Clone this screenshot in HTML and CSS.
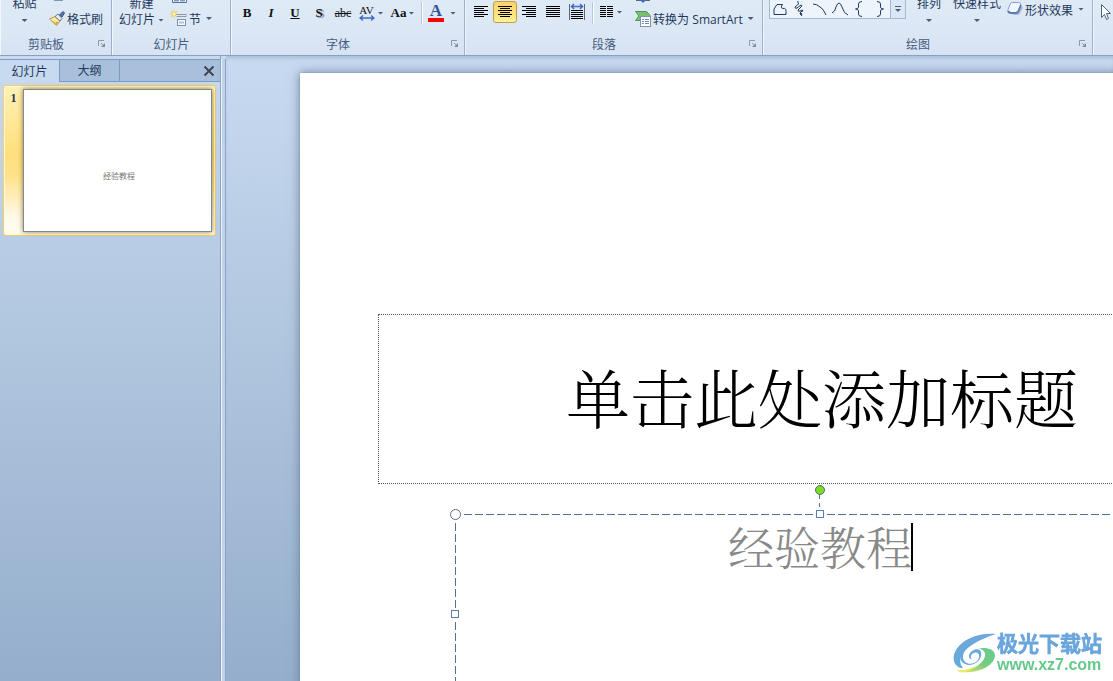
FILE: index.html
```html
<!DOCTYPE html>
<html lang="zh-CN">
<head>
<meta charset="utf-8">
<title>演示文稿</title>
<link rel="stylesheet" href="styles.css">
</head>
<body>
<div class="app">
  <header class="ribbon">
    <section class="group clipboard" aria-label="剪贴板">
      <div class="tools">
        <button class="large">粘贴<i class="caret"></i></button>
        <div class="stack">
          <button class="small" aria-label="复制"><svg width="20" height="16" viewBox="0 0 20 16"><path d="M5 6.500h9" stroke="#7f95b8" stroke-width="1"/></svg></button>
          <button class="small"><svg width="16" height="16" viewBox="0 0 16 16"><path d="M0.500 8L6 5.500 11 10 7.500 14.500z" fill="#f6e48c" stroke="#b39a4b"/><path d="M2 9l5.500 5 2-3z" fill="#d8ae3d"/><path d="M3 8.500l4 3M5.500 7.500l3.500 3" stroke="#fffce0"/><path d="M6 5.500L9 3l4 4.500-2 2.500z" fill="#e9ecf3" stroke="#6e7890"/><path d="M10.500 4L14 .5 15.500 2 13 6z" fill="#5873a8" stroke="#364f80"/></svg>格式刷</button>
        </div>
      </div>
      <footer class="caption"><span>剪贴板</span><button class="launcher" aria-label="剪贴板选项"><svg width="8" height="8" viewBox="0 0 8 8"><path d="M.5 6V.5H6" fill="none" stroke="#8d99ab"/><path d="M3 3l3 3" stroke="#8d99ab"/><path d="M7 3v4H3z" fill="#7f8ca0"/></svg></button></footer>
    </section>
    <section class="group slides" aria-label="幻灯片">
      <div class="tools">
        <button class="large">新建<span class="line">幻灯片<i class="caret"></i></span></button>
        <div class="stack">
          <button class="small" aria-label="版式"><svg width="18" height="16" viewBox="0 0 18 16"><path d="M2.500 0v8.500h14V0" fill="#fff" stroke="#53709f"/><path d="M4 6.500h5M10 6.500h5" stroke="#7f99c4" stroke-width="2"/></svg></button>
          <button class="small"><svg width="17" height="17" viewBox="0 0 17 17"><path d="M6 5.500h10.500" stroke="#8b98ac" stroke-width="3"/><path d="M6 5.500h10" stroke="#dfe5ef"/><path d="M4 0v8M0 4h8M1 1l6 6M7 1L1 7" stroke="#f2c445" stroke-width="1"/><circle cx="4" cy="4" r="1.500" fill="#fff6b0"/><rect x="7.500" y="9.500" width="8" height="6" fill="#f8fbff" stroke="#8090aa"/><path d="M9 12.500h5" stroke="#b3c0d6" stroke-width="2"/></svg>节<i class="caret"></i></button>
        </div>
      </div>
      <footer class="caption"><span>幻灯片</span></footer>
    </section>
    <section class="group font" aria-label="字体">
      <div class="tools row">
        <button class="tool"><b>B</b></button>
        <button class="tool"><b><em>I</em></b></button>
        <button class="tool"><b><u>U</u></b></button>
        <button class="tool shadow"><b>S</b></button>
        <button class="tool strike"><s>abc</s></button>
        <button class="tool wide" aria-label="字符间距"><span class="spacing">AV<svg width="16" height="6" viewBox="0 0 16 6"><path d="M1 3h14M4 .5L1 3l3 2.500M12 .5L15 3l-3 2.500" fill="none" stroke="#3d6bc0" stroke-width="1.300"/></svg></span><i class="caret"></i></button>
        <button class="tool wide case">Aa<i class="caret"></i></button>
        <i class="divider"></i>
        <button class="tool wide color" aria-label="字体颜色"><span class="swatch">A</span><i class="caret"></i></button>
      </div>
      <footer class="caption"><span>字体</span><button class="launcher" aria-label="字体选项"><svg width="8" height="8" viewBox="0 0 8 8"><path d="M.5 6V.5H6" fill="none" stroke="#8d99ab"/><path d="M3 3l3 3" stroke="#8d99ab"/><path d="M7 3v4H3z" fill="#7f8ca0"/></svg></button></footer>
    </section>
    <section class="group paragraph" aria-label="段落">
      <div class="tools row">
        <button class="tool" aria-label="左对齐"><svg width="16" height="14" viewBox="0 0 16 14"><path d="M1 1.500h14M1 3.500h10M1 5.500h14M1 7.500h10M1 9.500h14M1 11.500h10" stroke="#000"/></svg></button>
        <button class="tool active" aria-label="居中"><svg width="16" height="14" viewBox="0 0 16 14"><path d="M1 1.500h14M3 3.500h10M1 5.500h14M3 7.500h10M1 9.500h14M3 11.500h10" stroke="#000"/></svg></button>
        <button class="tool" aria-label="右对齐"><svg width="16" height="14" viewBox="0 0 16 14"><path d="M1 1.500h14M5 3.500h10M1 5.500h14M5 7.500h10M1 9.500h14M5 11.500h10" stroke="#000"/></svg></button>
        <button class="tool" aria-label="两端对齐"><svg width="16" height="14" viewBox="0 0 16 14"><path d="M1 1.500h14M1 3.500h14M1 5.500h14M1 7.500h14M1 9.500h14M1 11.500h14" stroke="#000"/></svg></button>
        <button class="tool" aria-label="分散对齐"><svg width="16" height="18" viewBox="0 0 16 18"><path d="M.5 1v16M15.500 1v16" stroke="#5b6577"/><path d="M2 3.500h12M5 1L2.500 3.500 5 6M11 1l2.500 2.500L11 6" fill="none" stroke="#3d6bc0" stroke-width="1.500"/><path d="M2 7.500h12M2 9.500h12M2 11.500h12M2 13.500h12M2 15.500h12" stroke="#000"/></svg></button>
        <i class="divider"></i>
        <button class="tool wide" aria-label="分栏"><svg width="14" height="14" viewBox="0 0 14 14"><path d="M0 1.500h6M0 3.500h6M0 5.500h6M0 7.500h6M0 9.500h6M0 11.500h6M7 1.500h6M7 3.500h6M7 5.500h6M7 7.500h6M7 9.500h6M7 11.500h6" stroke="#000"/></svg><i class="caret"></i></button>
        <div class="stack">
          <button class="small" aria-label="对齐文本"><svg width="16" height="16" viewBox="0 0 16 16"><path d="M1 6.500h14" stroke="#5b6577"/><path d="M5 6h6L8 9z" fill="#3d6bc0"/></svg></button>
          <button class="small"><svg width="16" height="16" viewBox="0 0 16 16"><path d="M.5 .5h11l3.500 4-3 5H.5l3.500-4.500z" fill="#7cbf72" stroke="#4b9654"/><rect x="5.500" y="5.500" width="10" height="10" fill="#fff" stroke="#8092af"/><path d="M7 8.500h2M10 8.500h4M7 10.500h2M10 10.500h4M7 12.500h2M10 12.500h4" stroke="#6c8dbb"/></svg><span>转换为 <span class="latin">SmartArt</span></span><i class="caret"></i></button>
        </div>
      </div>
      <footer class="caption"><span>段落</span><button class="launcher" aria-label="段落选项"><svg width="8" height="8" viewBox="0 0 8 8"><path d="M.5 6V.5H6" fill="none" stroke="#8d99ab"/><path d="M3 3l3 3" stroke="#8d99ab"/><path d="M7 3v4H3z" fill="#7f8ca0"/></svg></button></footer>
    </section>
    <section class="group drawing" aria-label="绘图">
      <div class="tools">
        <div class="gallery">
          <button aria-label="任意多边形"><svg width="14" height="14" viewBox="0 0 14 14"><path d="M1 12.500V7l3-4.500h5.500Q7 6 10 6.500q3-1 3 3v3z" fill="none" stroke="#24395d"/></svg></button>
          <button aria-label="自由曲线"><svg width="14" height="16" viewBox="0 0 14 16"><path d="M5 0q-1 2 1 2.500L2 6q0 2 2 1l4-3q2 0 0 2L5 9q0 2 2 1 3-2 3 0-3 0-3 3 2 2 2 0-1-2-2 0l2 2" fill="none" stroke="#24395d"/></svg></button>
          <button aria-label="弧形"><svg width="14" height="14" viewBox="0 0 14 14"><path d="M0 2q4 0 7 3 3 1 6 8" fill="none" stroke="#24395d"/></svg></button>
          <button aria-label="曲线"><svg width="16" height="14" viewBox="0 0 16 14"><path d="M0 11q3-1 4-6 3-8 6 0 2 7 6 8" fill="none" stroke="#24395d"/></svg></button>
          <button aria-label="左大括号"><svg width="14" height="16" viewBox="0 0 14 16"><path d="M9 .5Q5.500.5 5.500 3v3q0 2-3 2 3 0 3 2v3q0 2.500 3.500 2.500" fill="none" stroke="#24395d"/></svg></button>
          <button aria-label="右大括号"><svg width="14" height="16" viewBox="0 0 14 16"><path d="M4 .5Q7.500.5 7.500 3v3q0 2 3 2-3 0-3 2v3q0 2.500-3.500 2.500" fill="none" stroke="#24395d"/></svg></button>
          <button class="more" aria-label="更多形状"><svg width="8" height="8" viewBox="0 0 8 8"><path d="M1 1.500h6" stroke="#485d7d"/><path d="M1 4h6L4 7z" fill="#485d7d"/></svg></button>
        </div>
        <button class="large arrange">排列<i class="caret"></i></button>
        <button class="large quick">快速样式<i class="caret"></i></button>
        <button class="small effects"><svg width="16" height="16" viewBox="0 0 16 16"><path d="M4 14h8l4-7-1-2-4 7z" fill="#b3bfd3"/><path d="M4.500 1.500h7q3 0 2 3l-2 5q-1 2-3 2h-6q-2.500 0-1.500-3l2-5q.5-2 1.500-2z" fill="#f1f6ff" stroke="#86a0cd"/><path d="M1 10q1 2 3 2h5q2 0 3-3l2-5" fill="none" stroke="#5c7bb3" stroke-width="2"/></svg>形状效果<i class="caret"></i></button>
      </div>
      <footer class="caption"><span>绘图</span><button class="launcher" aria-label="绘图选项"><svg width="8" height="8" viewBox="0 0 8 8"><path d="M.5 6V.5H6" fill="none" stroke="#8d99ab"/><path d="M3 3l3 3" stroke="#8d99ab"/><path d="M7 3v4H3z" fill="#7f8ca0"/></svg></button></footer>
    </section>
    <section class="group editing" aria-label="编辑">
      <div class="tools row"><button class="tool" aria-label="选择"><svg width="12" height="18" viewBox="0 0 12 18"><path d="M1.500 .5v13l3-3 2 5 2-1-2-5h4z" fill="#fff" stroke="#4d6285"/></svg></button></div>
    </section>
  </header>
  <main class="workspace">
    <aside class="pane">
      <nav class="tabs">
        <button class="tab selected">幻灯片</button>
        <button class="tab">大纲</button>
        <button class="close" aria-label="关闭"><svg width="12" height="12" viewBox="0 0 12 12"><path d="M1.500 1.500l9 9M10.500 1.500l-9 9" stroke="#3f454f" stroke-width="2"/></svg></button>
      </nav>
      <button class="thumb"><b class="number">1</b><span class="preview">经验教程</span></button>
    </aside>
    <div class="splitter"></div>
    <section class="canvas">
      <article class="slide">
        <h1 class="title">单击此处添加标题</h1>
        <div class="subtitle">
          <svg class="outline" aria-hidden="true"><path d="M0 .5H730M.5 0V300" fill="none" stroke="#4f719b" stroke-dasharray="8 3" stroke-dashoffset="2"/></svg>
          <p class="entry" role="textbox">经验教程<i class="cursor"></i></p>
          <svg class="stem" width="12" height="30" viewBox="0 0 12 30"><path d="M5.500 11v14" stroke="#4f719b" stroke-dasharray="4 4"/><circle cx="6" cy="6" r="4.500" fill="#7ddb2d" stroke="#56734f"/></svg>
          <i class="handle corner"></i>
          <i class="handle top"></i>
          <i class="handle side"></i>
        </div>
      </article>
    </section>
  </main>
  <div class="brand">
    <svg width="44" height="42" viewBox="0 0 44 42"><defs><linearGradient id="leaf" x1="0" x2="1" y1="1" y2="0"><stop stop-color="#eeea62"/><stop offset=".5" stop-color="#78cc7c"/><stop offset="1" stop-color="#62cc95"/></linearGradient><linearGradient id="wave" x1="0" x2="1" y1="1" y2="0"><stop stop-color="#62abd8"/><stop offset="1" stop-color="#75a5e0"/></linearGradient></defs><path d="M43 2C32 1 18 3 8 12-1 20-1 30 4 34c2 2 4 2 6 2C2 27 11 12 43 2z" fill="url(#wave)"/><path d="M36 5C22 8 10 16 10 25c0 7 9 9 14 4 4-4 2-10-3-8-3 1-4 4-2 6-4 0-4-5 0-8 5-4 11-1 9 5-2 8-13 12-19 6C3 22 17 8 36 5z" fill="url(#wave)"/><path d="M25 17c6-2 16-1 17 6 0 10-15 19-36 17 14-1 27-10 26-18 0-3-3-5-7-5z" fill="url(#leaf)"/><path d="M4 38q10 1 18-4-6 7-16 6z" fill="#eeea62"/></svg>
    <div class="brandtext"><strong>极光下载站</strong><a href="#">www.xz7.com</a></div>
  </div>
</div>
</body>
</html>
```
FILE: styles.css
```css
* { box-sizing: border-box; }
body {
  margin: 0;
  font-family: "Liberation Sans", "Noto Sans CJK SC", sans-serif;
  font-size: 12px;
  color: #1e395b;
}
button {
  display: flex;
  align-items: center;
  padding: 0;
  border: 0;
  background: none;
  color: inherit;
  font: inherit;
  white-space: nowrap;
}
svg { display: block; flex: none; }
.app { display: flex; flex-direction: column; height: 100vh; overflow: hidden; }

.ribbon {
  display: flex;
  flex: none;
  overflow: hidden;
  background: linear-gradient(#dfeaf7, #dce7f5 60%, #d6e3f3);
  border-bottom: 1px solid #8ba0bc;
}
.group {
  display: flex;
  flex: none;
  flex-direction: column;
  height: 55px;
  border-right: 1px solid #9bb0d0;
  border-left: 1px solid #f2f7fd;
}
.clipboard { width: 112px; }
.slides { width: 119px; }
.font { width: 234px; }
.paragraph { width: 298px; }
.drawing { width: 330px; }
.editing { flex: 1; border-right: 0; }
.tools { display: flex; height: 40px; margin-top: -6px; align-items: flex-start; }
.row { padding-top: 6px; }
.caption { display: flex; position: relative; height: 18px; justify-content: center; align-items: center; padding-right: 20px; color: #445b7d; }
.slides .caption { padding-right: 0; }
.launcher { position: absolute; right: 5px; top: 6px; }
.caret { flex: none; width: 6px; height: 3px; background: #4d5c73; clip-path: polygon(0 0, 100% 0, 50% 100%); }
.large { flex-direction: column; line-height: 20px; }
.large > .caret { margin-top: 5px; }
.large .line { display: flex; align-items: center; gap: 3px; line-height: 12px; }
.clipboard .large { width: 47px; }
.slides .large { width: 57px; }
.stack { display: flex; flex-direction: column; align-items: flex-start; }
.small { height: 16px; gap: 2px; }
.small + .small { height: 17px; }
.small .caret { margin-left: 3px; }
.clipboard .stack { padding-left: 1px; }

.tool { width: 24px; height: 26px; justify-content: center; font-family: "Liberation Serif", serif; font-size: 13px; color: #111; }
.wide { width: 32px; gap: 3px; }
.font .tools { padding-left: 3px; }
.shadow { text-shadow: 2px 1px 1px #7e8796; }
.strike { font-size: 12px; }
.spacing { display: flex; flex-direction: column; align-items: center; font-size: 11px; line-height: 10px; }
.case { width: 31px; gap: 2px; font-weight: bold; }
.divider { width: 2px; height: 22px; margin: 2px 3px; background: #b8c6da; border-right: 1px solid #fff; }
.color { gap: 6px; }
.swatch { width: 16px; border-bottom: 4px solid #f00; font-size: 17px; font-weight: bold; line-height: 14px; color: #355591; }
.paragraph .tools { padding-left: 4px; }
.paragraph .tool { width: 24px; height: 24px; }
.paragraph .wide { width: 32px; }
.paragraph .active { height: 22px; margin-top: 1px; border: 1px solid #c29b4b; border-radius: 3px; background: linear-gradient(#fbd36c, #ffe277 60%, #fff29a); }
.paragraph .stack { margin-top: -6px; padding-left: 8px; }
.paragraph .tools { padding-left: 3px; }
.paragraph .divider { margin: 2px 1px 2px 3px; }
.latin { font-family: "Open Sans", sans-serif; line-height: 16px; }
.gallery { display: flex; height: 25px; margin-left: 5px; border: 1px solid #a6b8d1; background: #edf4fc; }
.gallery button { width: 20px; justify-content: center; padding-top: 4px; }
.gallery .more { width: 15px; border-left: 1px solid #a6b8d1; background: #dce7f5; }
.arrange { width: 46px; }
.quick { width: 50px; }
.effects { height: 20px; margin: 5px 0 0 5px; }

.workspace { display: flex; flex: 1; min-height: 0; background: linear-gradient(#c8daf0, #b3c9e1 40%, #95aecc); }
.pane { flex: none; width: 221px; padding-top: 3px; border-right: 1px solid #8aa3c4; }
.tabs { display: flex; height: 23px; background: #a9c0dc; border-top: 1px solid #7f9ac0; }
.tab { width: 60px; justify-content: center; padding-bottom: 2px; border-right: 1px solid #7f9ac0; border-bottom: 1px solid #7f9ac0; }
.selected { background: #c8daf0; border-bottom: 0; }
.close { flex: 1; justify-content: flex-end; padding-right: 5px; border-bottom: 1px solid #7f9ac0; }
.thumb { width: 213px; height: 151px; margin: 3px 0 0 3px; padding: 3px; align-items: stretch; border: 1px solid #f4cf65; border-radius: 3px; background: linear-gradient(#fff0b5, #ffe07d 45%, #ffe28a 60%, #fffbed 90%); box-shadow: inset 0 0 0 1px #fff8dc; }
.number { width: 16px; padding: 2px 3px 0 0; font-family: "Liberation Serif", serif; }
.preview { display: flex; flex: 1; justify-content: center; align-items: center; padding: 30px 0 0 3px; border: 1px solid #828991; background: #fff; box-shadow: 0 0 5px #8d7b42; font-size: 8px; color: #777; }
.splitter { flex: none; width: 5px; margin-top: 3px; border-right: 1px solid #8aa3c4; border-left: 1px solid #eef5fd; background: #c0d3ea; }
.canvas { position: relative; flex: 1; overflow: hidden; box-shadow: inset 0 4px 4px -2px #a6bbd6; }
.slide { position: absolute; top: 17px; left: 74px; width: 1040px; height: 780px; background: #fff; box-shadow: 0 0 10px #6b7f99, 0 0 1px #6b7f99; }
.title {
  display: flex;
  position: absolute;
  top: 241px;
  left: 78px;
  width: 884px;
  height: 170px;
  margin: 0;
  padding: 0 0 8px 4px;
  justify-content: center;
  align-items: center;
  border: 1px dotted #555;
  color: #000;
  font-family: "Noto Serif CJK SC", "Noto Sans CJK SC", serif;
  font-size: 64px;
  font-weight: 300;
}
.subtitle { position: absolute; top: 441px; left: 155px; width: 730px; height: 200px; }
.outline { position: absolute; inset: 0; width: 100%; height: 100%; }
.entry { display: flex; height: 66px; margin: 0; padding-bottom: 4px; justify-content: center; align-items: center; font-family: "Noto Serif CJK SC", "Noto Sans CJK SC", serif; font-size: 46px; font-weight: 300; color: #888; }
.cursor { width: 2px; height: 48px; margin: 4px -1px 0; background: #000; }
.stem { position: absolute; top: -30px; left: 359px; }
.handle { position: absolute; width: 8px; height: 8px; border: 1px solid #5a7fae; background: #fff; box-shadow: 0 0 0 1px #fff; }
.corner { top: -5px; left: -5px; width: 11px; height: 11px; border-color: #666c78; border-radius: 50%; box-shadow: 0 0 0 3px #fff; }
.top { top: -4px; left: 361px; }
.side { top: 96px; left: -4px; }
.brand { display: flex; position: fixed; right: 11px; bottom: 7px; align-items: center; }
.brandtext { display: flex; flex-direction: column; }
.brandtext strong { font-size: 21px; font-weight: 500; line-height: 24px; color: #6aa5dd; -webkit-text-stroke: 1px #6aa5dd; }
.brandtext a { font-size: 16px; font-weight: bold; line-height: 18px; color: #65c98b; text-decoration: none; }
```
